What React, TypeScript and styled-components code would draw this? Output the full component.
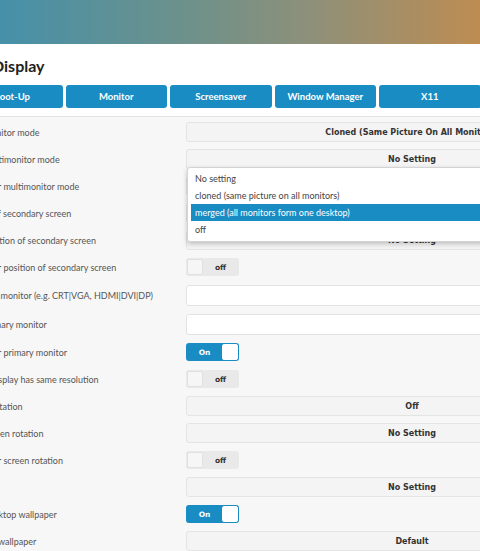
import React from 'react'
import styled, { createGlobalStyle } from 'styled-components'

const GlobalStyle = createGlobalStyle`
  html, body {
    margin: 0;
    padding: 0;
  }
  body {
    background: #f7f7f7;
    overflow: hidden;
    font-family: Lato, "Noto Sans", sans-serif;
  }
`

const Banner = styled.header`
  height: 44px;
  background: linear-gradient(90deg, #4690a9 0%, #6c918b 38%, #8e9079 65%, #bd8c52 100%);
`

// the page is wider than the window and shifted left, as in the shot
const Page = styled.div`
  margin-left: -39px;
  width: 720px;
`

const TitleBar = styled.div`
  background: #fff;
  padding: 10px 0 8px;
  border-bottom: 1px solid #e2e2e2;
`

const Title = styled.h1`
  margin: 0 0 7px 31px;
  font: 700 16px/24px Lato, "Noto Sans", sans-serif;
  color: #222;
`

const Tabs = styled.nav`
  display: flex;
  gap: 3px;
`

const Tab = styled.button`
  flex: none;
  width: 101.5px;
  height: 23px;
  padding: 0;
  border: 0;
  border-radius: 3px;
  background: #1a8cc4;
  color: #fff;
  font: 700 9.5px Lato, "Noto Sans", sans-serif;
  cursor: pointer;
`

const Settings = styled.div`
  padding: 1.5px 0 0 22px;
`

const Row = styled.div<{ $tall?: boolean }>`
  display: grid;
  grid-template-columns: 203px 452px;
  align-items: center;
  padding: ${p => (p.$tall ? '4px 0' : '3.5px 0')};
`

const Label = styled.label`
  font: 400 9px Lato, "Noto Sans", sans-serif;
  color: #555;
  white-space: nowrap;
`

const Select = styled.div`
  position: relative;
  box-sizing: border-box;
  height: 20px;
  display: flex;
  align-items: center;
  justify-content: center;
  background: #f4f4f4;
  border: 1px solid #e4e4e4;
  border-radius: 3px;
  font: 700 8px "DejaVu Sans", Verdana, sans-serif;
  color: #333;
`

const Menu = styled.ul`
  position: absolute;
  top: 17px;
  left: 0;
  z-index: 5;
  box-sizing: border-box;
  width: 452px;
  margin: 0;
  padding: 1.5px 3px 3.5px;
  list-style: none;
  background: #fff;
  border: 1px solid #d4d4d4;
  border-radius: 3px;
  box-shadow: 0 2px 5px rgba(0, 0, 0, 0.22);
  text-align: left;
`

const MenuItem = styled.li<{ $active?: boolean }>`
  height: 17px;
  padding: 0 4px;
  font: 400 9px/17px Lato, "Noto Sans", sans-serif;
  color: ${p => (p.$active ? '#fff' : '#444')};
  background: ${p => (p.$active ? '#1a8cc4' : 'transparent')};
`

const Input = styled.input`
  box-sizing: border-box;
  height: 21px;
  width: 100%;
  margin: 0;
  background: #fff;
  border: 1px solid #e3e3e3;
  border-radius: 3px;
`

const Toggle = styled.div<{ $on?: boolean }>`
  box-sizing: border-box;
  width: 53px;
  height: 18px;
  margin: 1px 0;
  display: flex;
  flex-direction: ${p => (p.$on ? 'row-reverse' : 'row')};
  align-items: stretch;
  padding: 1px;
  background: ${p => (p.$on ? '#1a8cc4' : '#e9e9e9')};
  border-radius: 3px;
`

const Knob = styled.span<{ $on?: boolean }>`
  box-sizing: border-box;
  width: 16px;
  background: ${p => (p.$on ? '#fff' : '#f6f6f6')};
  border: 1px solid ${p => (p.$on ? '#fff' : '#e0e0e0')};
  border-radius: 2px;
`

const ToggleText = styled.span<{ $on?: boolean }>`
  flex: 1;
  display: flex;
  align-items: center;
  justify-content: center;
  font: 700 7.5px "DejaVu Sans", Verdana, sans-serif;
  color: ${p => (p.$on ? '#fff' : '#333')};
`

type Setting =
  | { label: string; kind: 'select'; value: string; open?: boolean }
  | { label: string; kind: 'toggle'; on: boolean }
  | { label: string; kind: 'input' }

const options = [
  'No setting',
  'cloned (same picture on all monitors)',
  'merged (all monitors form one desktop)',
  'off',
]

const settings: Setting[] = [
  { label: 'Monitor mode', kind: 'select', value: 'Cloned (Same Picture On All Monitors)' },
  { label: 'Multimonitor mode', kind: 'select', value: 'No Setting', open: true },
  { label: 'User multimonitor mode', kind: 'select', value: 'No Setting' },
  { label: 'Id of secondary screen', kind: 'select', value: 'No Setting' },
  { label: 'Position of secondary screen', kind: 'select', value: 'No Setting' },
  { label: 'User position of secondary screen', kind: 'toggle', on: false },
  { label: '2nd monitor (e.g. CRT|VGA, HDMI|DVI|DP)', kind: 'input' },
  { label: 'Primary monitor', kind: 'input' },
  { label: 'User primary monitor', kind: 'toggle', on: true },
  { label: 'A display has same resolution', kind: 'toggle', on: false },
  { label: 'X rotation', kind: 'select', value: 'Off' },
  { label: 'Screen rotation', kind: 'select', value: 'No Setting' },
  { label: 'User screen rotation', kind: 'toggle', on: false },
  { label: 'DPI', kind: 'select', value: 'No Setting' },
  { label: 'Desktop wallpaper', kind: 'toggle', on: true },
  { label: 'Set wallpaper', kind: 'select', value: 'Default' },
]

const tabs = ['Boot-Up', 'Monitor', 'Screensaver', 'Window Manager', 'X11', 'Xorg']

const Control = ({ s }: { s: Setting }) => {
  if (s.kind === 'select') {
    return (
      <Select>
        {s.value}
        {s.open && (
          <Menu>
            {options.map(o => (
              <MenuItem key={o} $active={o.startsWith('merged')}>
                {o}
              </MenuItem>
            ))}
          </Menu>
        )}
      </Select>
    )
  }
  if (s.kind === 'toggle') {
    return (
      <Toggle $on={s.on}>
        <Knob $on={s.on} />
        <ToggleText $on={s.on}>{s.on ? 'On' : 'off'}</ToggleText>
      </Toggle>
    )
  }
  return <Input type="text" />
}

export default function App() {
  return (
    <>
      <GlobalStyle />
      <Banner />
      <Page>
        <TitleBar>
          <Title>Display</Title>
          <Tabs>
            {tabs.map(t => (
              <Tab key={t}>{t}</Tab>
            ))}
          </Tabs>
        </TitleBar>
        <Settings>
          {settings.map(s => (
            <Row key={s.label} $tall={s.kind === 'input'}>
              <Label>{s.label}</Label>
              <Control s={s} />
            </Row>
          ))}
        </Settings>
      </Page>
    </>
  )
}
